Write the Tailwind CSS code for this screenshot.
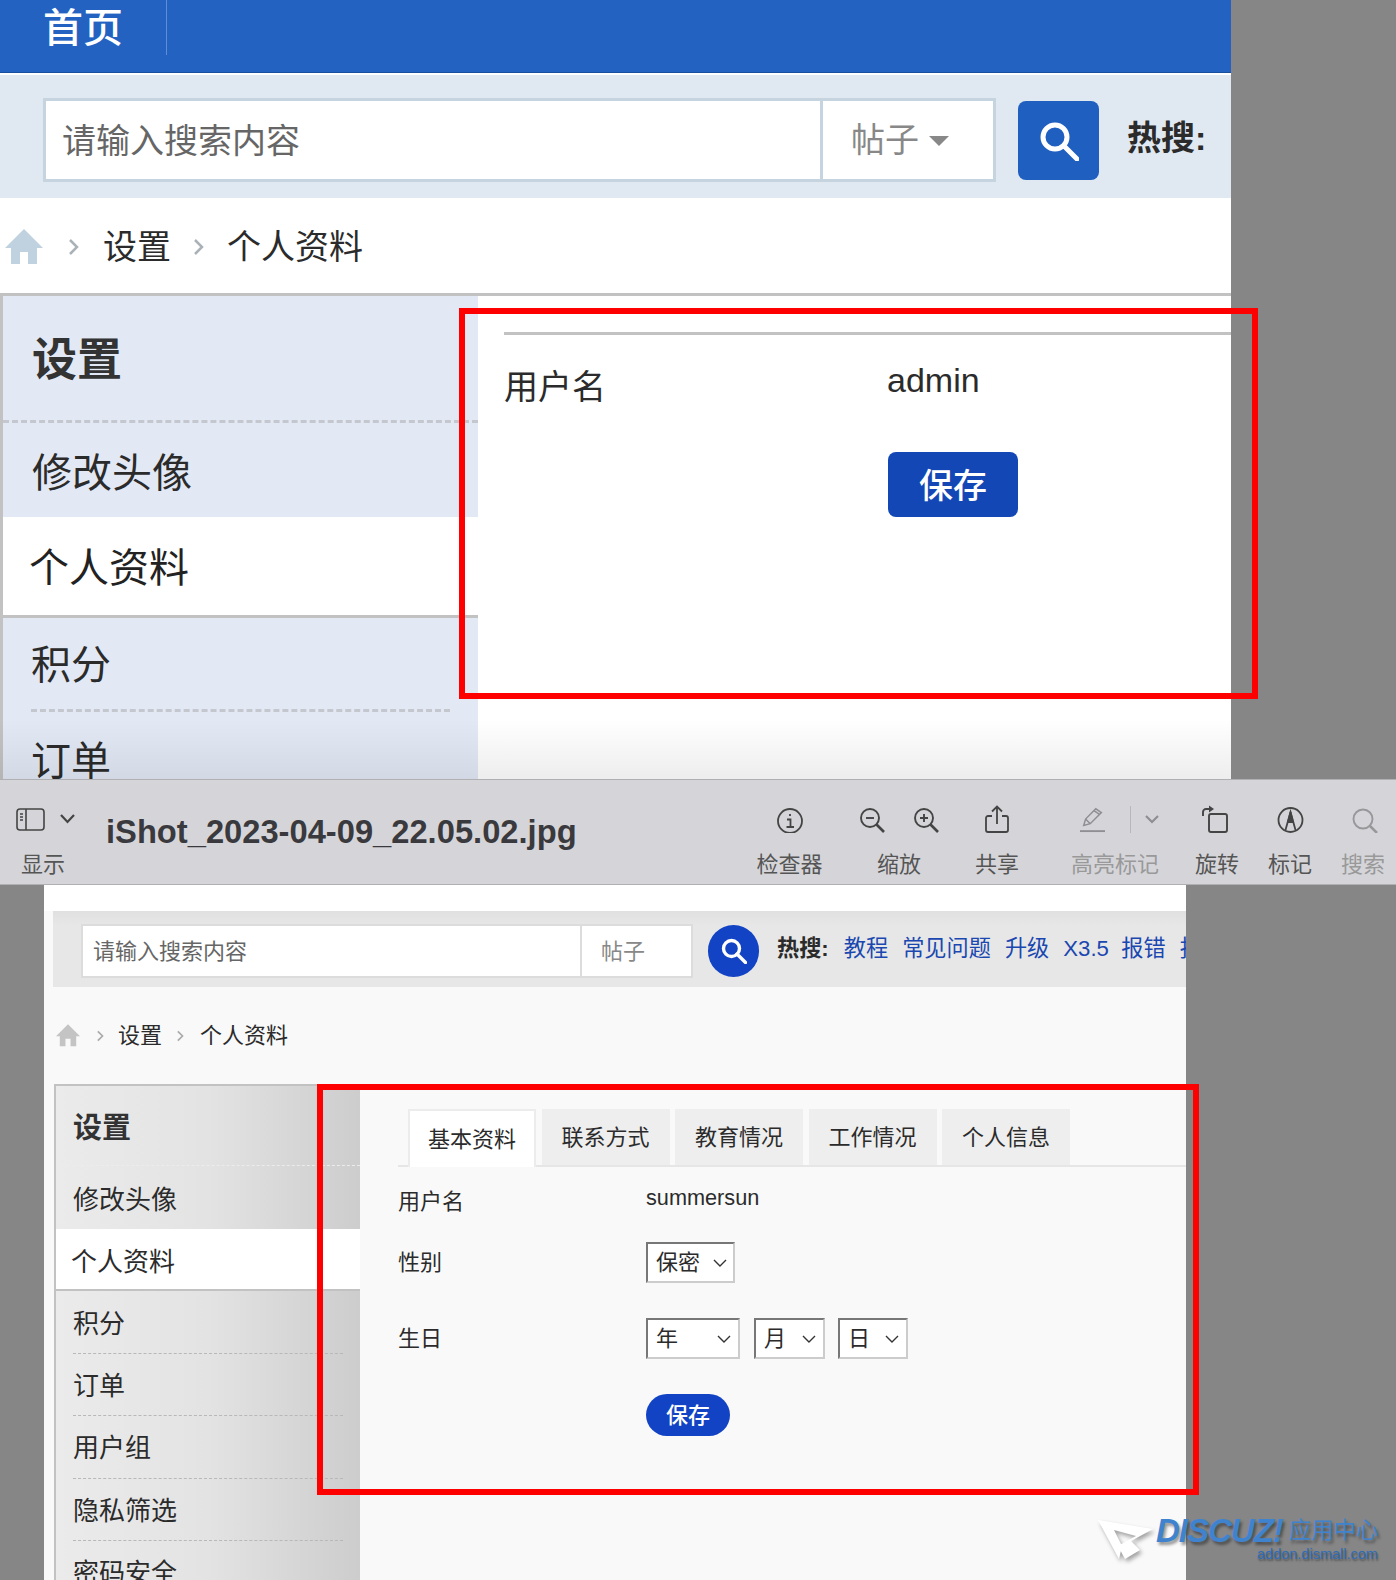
<!DOCTYPE html>
<html lang="zh-CN">
<head>
    <meta charset="UTF-8">
    <title>个人资料</title>
    <script src="https://cdn.jsdelivr.net/npm/@tailwindcss/browser@4"></script>
</head>
<body class="relative w-[1396px] h-[1580px] overflow-hidden bg-[#868686] font-['Liberation_Sans','Noto_Sans_CJK_SC',sans-serif] text-[#2b2b2b]">

    <!-- 上半部分截图 -->
    <section class="relative w-[1231px] h-[779px] bg-white overflow-hidden">
        <div class="flex h-[73px] bg-[#2362c1] border-b border-[#1a4f9f]">
            <a class="flex items-center w-[167px] h-[55px] pl-[43px] border-r border-[#5f8ed6] text-[40px] font-medium text-white">首页</a>
        </div>
        <div class="h-[2px] bg-white"></div>
        <div class="flex items-start h-[123px] pt-[23px] pl-[43px] bg-[#e0e8f1]">
            <div class="flex w-[953px] h-[84px] bg-white border-[3px] border-[#c6d4df]">
                <div class="flex items-center w-[777px] pl-[16px] pt-[2px] border-r-[3px] border-[#c6d4df] text-[34px] text-[#666]">请输入搜索内容</div>
                <div class="flex items-center pl-[28px] pt-[1px] text-[34px] text-[#888]">
                    帖子
                    <span class="ml-[10px] w-0 h-0 border-x-[10px] border-x-transparent border-t-[10px] border-t-[#888]"></span>
                </div>
            </div>
            <button class="flex items-center justify-center w-[81px] h-[79px] mt-[3px] ml-[22px] rounded-lg bg-[#1f5fc0]">
                <svg class="w-[40px] h-[40px]" viewBox="0 0 40 40" fill="none" stroke="white" stroke-width="5">
                    <circle cx="16" cy="16" r="12"/>
                    <path d="M25 25L38 38" stroke-linecap="round"/>
                </svg>
            </button>
            <span class="mt-[15px] ml-[28px] text-[34px] font-bold whitespace-nowrap">热搜:</span>
        </div>
        <div class="flex items-center h-[95px] pt-[3px] text-[34px] pl-[5px]">
            <svg class="w-[38px] h-[36px]" viewBox="0 0 38 36" fill="#c0d1e0"><path d="M19 0L38 19H32V35H23V23H15V35H6V19H0Z"/></svg>
            <svg class="w-[10px] h-[18px] ml-[26px]" viewBox="0 0 10 18" fill="none" stroke="#aab2b8" stroke-width="2.5"><path d="M1 2L8 9L1 16"/></svg>
            <span class="ml-[24px]">设置</span>
            <svg class="w-[10px] h-[18px] ml-[23px]" viewBox="0 0 10 18" fill="none" stroke="#aab2b8" stroke-width="2.5"><path d="M1 2L8 9L1 16"/></svg>
            <span class="ml-[23px]">个人资料</span>
        </div>
        <div class="flex border-t-[3px] border-[#c2c2c2]">
            <aside class="w-[478px] h-[483px] bg-[#e2e9f5] border-l-[3px] border-[#c2c2c2]">
                <div class="flex items-center h-[127px] pl-[29px] pt-[5px] border-b-[3px] border-dashed border-[#c4c8ce] text-[45px] font-bold text-[#333]">设置</div>
                <div class="flex items-center h-[94px] pl-[29px] pt-[6px] text-[40px]">修改头像</div>
                <div class="flex items-center h-[101px] pl-[26px] pt-[4px] bg-white border-b-[3px] border-[#c2c2c2] text-[40px] text-[#222]">个人资料</div>
                <div class="flex items-center h-[94px] mx-[28px] pt-[3px] border-b-[3px] border-dashed border-[#c4c8ce] text-[40px]">积分</div>
                <div class="flex items-center h-[98px] ml-[28px] text-[40px]">订单</div>
            </aside>
            <div class="flex-1 pl-[26px]">
                <div class="mt-[36px] border-t-[3px] border-[#c2c2c2]"></div>
                <div class="flex mt-[35px]">
                    <span class="w-[383px] text-[34px] leading-[34px]">用户名</span>
                    <span class="-mt-[7px] text-[34px] leading-[34px]">admin</span>
                </div>
                <button class="block w-[130px] h-[65px] mt-[48px] ml-[384px] pt-[4px] rounded-lg bg-[#1347b5] text-[34px] font-medium text-white">保存</button>
            </div>
        </div>
        <div class="absolute left-0 right-0 bottom-0 h-[60px] bg-gradient-to-b from-transparent to-black/7"></div>
    </section>

    <!-- 预览工具栏 -->
    <header class="flex h-[106px] bg-[#d5d5d9] border-y border-[#b0b0b3] pt-[25px]">
        <div class="w-[106px] pl-[16px]">
            <div class="flex items-center h-[28px]">
                <svg class="w-[29px] h-[23px]" viewBox="0 0 29 23" fill="none" stroke="#444" stroke-width="1.6">
                    <rect x="1" y="1" width="27" height="21" rx="3"/>
                    <path d="M10 1V22M4 6H7M4 9H7M4 12H7"/>
                </svg>
                <svg class="w-[15px] h-[10px] ml-[15px]" viewBox="0 0 15 10" fill="none" stroke="#444" stroke-width="2.2"><path d="M1 1L7.5 8L14 1"/></svg>
            </div>
            <div class="mt-[21px] ml-[5px] text-[22px] leading-[22px] text-[#555]">显示</div>
        </div>
        <div class="w-[650px] pt-[11px] text-[32.7px] leading-[32px] font-bold text-[#3a3a3e]">iShot_2023-04-09_22.05.02.jpg</div>

        <div class="flex flex-col items-center w-[67px]">
            <svg class="w-[28px] h-[28px]" viewBox="0 0 28 28" fill="none" stroke="#444" stroke-width="1.8">
                <circle cx="14" cy="16" r="12"/>
                <path d="M14 9V11M11 14.5H14.5V22M10.5 22H18"/>
            </svg>
            <span class="mt-[21px] text-[22px] leading-[22px] text-[#555] whitespace-nowrap">检查器</span>
        </div>
        <div class="flex flex-col items-center w-[44px] ml-[54px]">
            <div class="flex gap-[29px] -mx-[20px] h-[28px] pt-[3px]">
                <svg class="w-[25px] h-[25px]" viewBox="0 0 25 25" fill="none" stroke="#444" stroke-width="1.9">
                    <circle cx="10" cy="10" r="9"/>
                    <path d="M16.5 16.5L24 24" stroke-width="2.6"/>
                    <path d="M6 10H14"/>
                </svg>
                <svg class="w-[25px] h-[25px]" viewBox="0 0 25 25" fill="none" stroke="#444" stroke-width="1.9">
                    <circle cx="10" cy="10" r="9"/>
                    <path d="M16.5 16.5L24 24" stroke-width="2.6"/>
                    <path d="M6 10H14M10 6V14"/>
                </svg>
            </div>
            <span class="mt-[21px] text-[22px] leading-[22px] text-[#555] whitespace-nowrap">缩放</span>
        </div>
        <div class="flex flex-col items-center w-[44px] ml-[54px]">
            <svg class="w-[24px] h-[28px]" viewBox="0 0 24 28" fill="none" stroke="#444" stroke-width="1.8">
                <path d="M7 11H3A2 2 0 0 0 1 13V25A2 2 0 0 0 3 27H21A2 2 0 0 0 23 25V13A2 2 0 0 0 21 11H17"/>
                <path d="M12 19V2M7 6.5L12 1.5L17 6.5"/>
            </svg>
            <span class="mt-[21px] text-[22px] leading-[22px] text-[#555] whitespace-nowrap">共享</span>
        </div>
        <div class="flex flex-col w-[88px] ml-[52px]">
            <div class="flex items-center h-[28px] pl-[9px]">
                <svg class="w-[27px] h-[27px]" viewBox="0 0 27 27" fill="none" stroke="#8f8f93" stroke-width="1.6">
                    <path d="M4 20L6 13L17 2L23 6L11 18Z"/>
                    <path d="M6 13L11 18M15 4L21 8"/>
                    <path d="M0 26H27" stroke-width="2"/>
                </svg>
                <span class="w-px h-[27px] ml-[25px] bg-[#b8b8bb]"></span>
                <svg class="shrink-0 w-[14px] h-[9px] ml-[14px]" viewBox="0 0 14 9" fill="none" stroke="#8f8f93" stroke-width="2.2"><path d="M1 1L7 7L13 1"/></svg>
            </div>
            <span class="mt-[21px] text-[22px] leading-[22px] text-[#999] whitespace-nowrap">高亮标记</span>
        </div>
        <div class="flex flex-col items-center w-[44px] ml-[36px]">
            <svg class="w-[27px] h-[28px] -translate-x-[3px]" viewBox="0 0 27 28" fill="none" stroke="#444" stroke-width="1.9">
                <rect x="8" y="9" width="18" height="18" rx="2"/>
                <path d="M2 11V7A3 3 0 0 1 5 4H9"/>
                <path d="M8 0.5L13 4L8 7.5Z" fill="#444" stroke="none"/>
            </svg>
            <span class="mt-[21px] text-[22px] leading-[22px] text-[#555] whitespace-nowrap">旋转</span>
        </div>
        <div class="flex flex-col items-center w-[44px] ml-[29px]">
            <svg class="w-[27px] h-[28px]" viewBox="0 0 27 28" fill="none" stroke="#444" stroke-width="1.8">
                <circle cx="13.5" cy="15" r="12"/>
                <path d="M8.5 25L13.5 7L18.5 25" />
                <path d="M13.5 7L16 17H11Z" fill="#444"/>
            </svg>
            <span class="mt-[21px] text-[22px] leading-[22px] text-[#555] whitespace-nowrap">标记</span>
        </div>
        <div class="flex flex-col items-center w-[44px] ml-[29px]">
            <svg class="w-[27px] h-[28px] translate-x-[2px]" viewBox="0 0 27 28" fill="none" stroke="#98989b" stroke-width="1.9">
                <circle cx="11" cy="14" r="9.5"/>
                <path d="M18 21L25 28" stroke-width="2.5"/>
            </svg>
            <span class="mt-[21px] text-[22px] leading-[22px] text-[#999] whitespace-nowrap">搜索</span>
        </div>
    </header>

    <!-- 下半部分截图 -->
    <section class="w-[1142px] h-[695px] ml-[44px] bg-[#f9f9f9] overflow-hidden">
        <div class="h-[26px] bg-white"></div>
        <div class="flex items-start h-[76px] ml-[9px] pt-[13px] pl-[28px] bg-gradient-to-b from-[#e0e0e0] from-0% to-[#e7e7e7] to-20% whitespace-nowrap overflow-hidden">
            <div class="flex shrink-0 w-[612px] h-[54px] bg-white border-2 border-[#dcdcdc]">
                <div class="flex items-center w-[499px] pl-[10px] border-r-2 border-[#dcdcdc] text-[22px] text-[#666]">请输入搜索内容</div>
                <div class="flex items-center pl-[19px] text-[22px] text-[#888]">帖子</div>
            </div>
            <button class="flex shrink-0 items-center justify-center w-[51px] h-[52px] mt-px ml-[15px] rounded-full bg-[#1143c4]">
                <svg class="w-[26px] h-[26px]" viewBox="0 0 26 26" fill="none" stroke="white" stroke-width="3.4">
                    <circle cx="10.5" cy="10.5" r="8"/>
                    <path d="M16 16L24.5 24.5" stroke-linecap="round"/>
                </svg>
            </button>
            <div class="flex gap-[14px] mt-[13px] ml-[18px] text-[22.2px] leading-[24px] text-[#1a47b0]">
                <span class="font-bold text-[#2b2b2b] mr-[1px]">热搜:</span>
                <a>教程</a><a>常见问题</a><a>升级</a><a class="w-[44px]">X3.5</a><a>报错</a><a>报告</a>
            </div>
        </div>
        <div class="flex items-center h-[97px] pl-[12px] text-[22px]">
            <svg class="w-[24px] h-[23px]" viewBox="0 0 38 36" fill="#c4c4c4"><path d="M19 0L38 19H32V35H23V23H15V35H6V19H0Z"/></svg>
            <svg class="w-[7px] h-[12px] ml-[17px]" viewBox="0 0 10 18" fill="none" stroke="#aaa" stroke-width="2.5"><path d="M1 2L8 9L1 16"/></svg>
            <span class="ml-[14px]">设置</span>
            <svg class="w-[7px] h-[12px] ml-[15px]" viewBox="0 0 10 18" fill="none" stroke="#aaa" stroke-width="2.5"><path d="M1 2L8 9L1 16"/></svg>
            <span class="ml-[16px]">个人资料</span>
        </div>
        <div class="flex ml-[10px] border-t-2 border-[#c2c2c2]">
            <aside class="w-[306px] h-[494px] bg-gradient-to-r from-[#ebebeb] via-[#e3e3e3] to-[#cdcdcd] border-l-2 border-[#c2c2c2] overflow-hidden text-[26px]">
                <div class="flex items-center h-[80px] pl-[17px] pt-[6px] border-b border-dashed border-[#ececec] text-[29px] font-bold text-[#333]">设置</div>
                <div class="flex items-center h-[63px] pl-[17px] pt-[6px]">修改头像</div>
                <div class="flex items-center h-[62px] pl-[15px] pt-[6px] bg-white border-b-2 border-[#c2c2c2]">个人资料</div>
                <div class="flex items-center h-[63px] ml-[17px] mr-[17px] pt-[4px] border-b border-dashed border-[#b8b8b8]">积分</div>
                <div class="flex items-center h-[62px] ml-[17px] mr-[17px] pt-[3px] border-b border-dashed border-[#b8b8b8]">订单</div>
                <div class="flex items-center h-[63px] ml-[17px] mr-[17px] pt-[3px] border-b border-dashed border-[#b8b8b8]">用户组</div>
                <div class="flex items-center h-[62px] ml-[17px] mr-[17px] pt-[3px] border-b border-dashed border-[#b8b8b8]">隐私筛选</div>
                <div class="flex items-center h-[62px] ml-[17px] pt-[3px]">密码安全</div>
            </aside>
            <div class="flex-1 pl-[38px] pt-[23px] text-[22px]">
                <div class="flex gap-[5.5px] h-[58px] pl-[10px] border-b-2 border-[#e6e6e6]">
                    <a class="flex items-center justify-center w-[128px] h-[58px] bg-white border-x-2 border-t-2 border-[#ececec]">基本资料</a>
                    <a class="flex items-center justify-center w-[128px] h-[56px] bg-[#eeeeee]">联系方式</a>
                    <a class="flex items-center justify-center w-[128px] h-[56px] bg-[#eeeeee]">教育情况</a>
                    <a class="flex items-center justify-center w-[128px] h-[56px] bg-[#eeeeee]">工作情况</a>
                    <a class="flex items-center justify-center w-[128px] h-[56px] bg-[#eeeeee]">个人信息</a>
                </div>
                <div class="flex mt-[24px] h-[22px] leading-[22px]">
                    <span class="w-[248px]">用户名</span>
                    <span class="-mt-[4px] text-[21.7px]">summersun</span>
                </div>
                <div class="flex items-center mt-[29px] h-[41px]">
                    <span class="w-[248px]">性别</span>
                    <div class="flex items-center justify-between w-[89px] h-[41px] pl-[8px] pr-[6px] bg-white border-2 border-[#ccc] border-t-[#777] border-l-[#777]">
                        保密
                        <svg class="w-[14px] h-[8px]" viewBox="0 0 14 8" fill="none" stroke="#333" stroke-width="1.4"><path d="M1 1L7 7L13 1"/></svg>
                    </div>
                </div>
                <div class="flex items-center mt-[35px] h-[41px]">
                    <span class="w-[248px]">生日</span>
                    <div class="flex items-center justify-between w-[94px] h-[41px] pl-[8px] pr-[7px] bg-white border-2 border-[#ccc] border-t-[#777] border-l-[#777]">
                        年
                        <svg class="w-[14px] h-[8px]" viewBox="0 0 14 8" fill="none" stroke="#333" stroke-width="1.4"><path d="M1 1L7 7L13 1"/></svg>
                    </div>
                    <div class="flex items-center justify-between w-[71px] h-[41px] ml-[14px] pl-[8px] pr-[7px] bg-white border-2 border-[#ccc] border-t-[#777] border-l-[#777]">
                        月
                        <svg class="w-[14px] h-[8px]" viewBox="0 0 14 8" fill="none" stroke="#333" stroke-width="1.4"><path d="M1 1L7 7L13 1"/></svg>
                    </div>
                    <div class="flex items-center justify-between w-[70px] h-[41px] ml-[13px] pl-[8px] pr-[7px] bg-white border-2 border-[#ccc] border-t-[#777] border-l-[#777]">
                        日
                        <svg class="w-[14px] h-[8px]" viewBox="0 0 14 8" fill="none" stroke="#333" stroke-width="1.4"><path d="M1 1L7 7L13 1"/></svg>
                    </div>
                </div>
                <button class="block w-[84px] h-[42px] mt-[35px] ml-[248px] rounded-full bg-[#1143c4] font-medium text-white">保存</button>
            </div>
        </div>
    </section>

    <!-- 红色标注框 -->
    <div class="absolute left-[459px] top-[308px] w-[799px] h-[391px] border-[6px] border-[#ff0000]"></div>
    <div class="absolute left-[317px] top-[1084px] w-[882px] h-[411px] border-[6px] border-[#ff0000]"></div>

    <!-- 水印 -->
    <svg class="absolute left-[1098px] top-[1520px] w-[56px] h-[40px] drop-shadow-[2px_3px_2px_rgba(0,0,0,0.35)]" viewBox="0 0 56 40" fill="white">
        <path d="M0 0L55 9L33 21L42 30L27 39L20 26L38 16L16 10L24 26L21 39Z"/>
    </svg>
    <div class="absolute left-[1156px] top-[1514px] flex items-center gap-[6px] whitespace-nowrap text-[#3f83cf] [text-shadow:2px_3px_3px_rgba(0,0,0,0.4)]">
        <span class="text-[33px] leading-[34px] font-bold italic tracking-[-1px]">DISCUZ!</span>
        <span class="text-[22.4px] leading-[34px]">应用中心</span>
    </div>
    <div class="absolute left-[1257px] top-[1545px] text-[14.5px] leading-[18px] text-[#2f6cb5] [text-shadow:1px_2px_2px_rgba(0,0,0,0.4)]">addon.dismall.com</div>
</body>
</html>
